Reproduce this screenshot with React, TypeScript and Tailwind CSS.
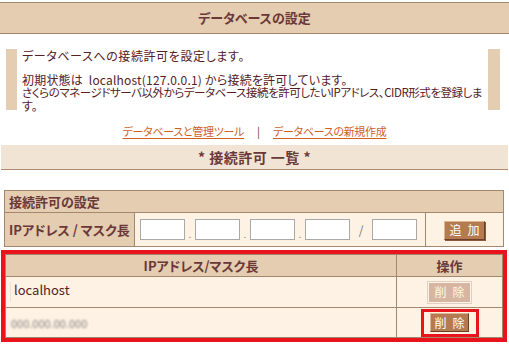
import React from 'react'

const font = "font-['Noto_Sans_CJK_JP',sans-serif] [font-feature-settings:'palt']"

function IpInput() {
  return (
    <span className="inline-block w-[45px] h-[21px] border border-[#a9a9a9] bg-white" />
  )
}

function Btn({ label, disabled, small }: { label: [string, string]; disabled?: boolean; small?: boolean }) {
  const base = disabled
    ? 'w-[43px] h-[21px] bg-[#d6b6a0] border border-[#fbf4ee] outline outline-1 outline-[#e3cdbd] text-[#fff5ee]'
    : small
      ? 'w-[39px] h-[19px] bg-[#b47b51] border border-t-[#e2b48e] border-l-[#e2b48e] border-r-[#6e3f24] border-b-[#6e3f24] text-white'
      : 'w-[41px] h-[19px] bg-[#b47b51] border border-t-[#e2b48e] border-l-[#e2b48e] border-r-[#6e3f24] border-b-[#6e3f24] shadow-[1px_1px_0_#8a5a3c] text-white'
  return (
    <button className={`${base} inline-flex items-center justify-center gap-[6px] text-[12px] leading-none align-middle`}>
      <span>{label[0]}</span>
      <span>{label[1]}</span>
    </button>
  )
}

export default function App() {
  return (
    <div className={`w-[509px] h-[344px] overflow-hidden bg-white pt-[2px] text-[12px] text-[#55201f] ${font}`}>
      {/* page title */}
      <div className="h-[32px] border-y border-[#a4876d] bg-[#e4cdb0] flex items-center justify-center">
        <span className="text-[13px] font-bold text-[#6b3838]">データベースの設定</span>
      </div>

      {/* description */}
      <div className="mt-[15px] ml-[6px] mr-[9px] h-[61px] border-l-[11px] border-r-[12px] border-[#e4cdb0] pl-[5px] whitespace-nowrap">
        <div className="h-[14px] leading-[14px] tracking-[0.6px]">データベースへの接続許可を設定します。</div>
        <div className="mt-[10px] h-[13px] leading-[13px] tracking-[0.2px]">初期状態は&nbsp; localhost(127.0.0.1) から接続を許可しています。</div>
        <div className="h-[13px] leading-[13px] text-[11.5px] tracking-[-0.45px]">さくらのマネージドサーバ以外からデータベース接続を許可したいIPアドレス、CIDR形式を登録しま</div>
        <div className="h-[13px] leading-[13px]">す。</div>
      </div>

      {/* links */}
      <div className="mt-[13px] h-[16px] leading-[16px] flex justify-center items-center text-[11px]">
        <a className="text-[#d0601f] underline underline-offset-2 tracking-[-0.3px]">データベースと管理ツール</a>
        <span className="mx-[13px] text-[#6b3838]">|</span>
        <a className="text-[#d0601f] underline underline-offset-2 tracking-[-0.3px]">データベースの新規作成</a>
      </div>

      {/* list heading */}
      <div className="mt-[6px] mx-[1px] h-[25px] border-b border-[#b08b70] bg-[#f2e4d4] flex items-center justify-center">
        <span className="text-[14px] font-bold text-[#6b3838] tracking-[0.5px]">* 接続許可 一覧 *</span>
      </div>

      {/* add form */}
      <table className="mt-[20px] ml-[4px] w-[500px] border-collapse border border-[#a4876d] table-fixed">
        <colgroup>
          <col className="w-[130px]" />
          <col className="w-[291px]" />
          <col />
        </colgroup>
        <tbody>
          <tr className="h-[22px]">
            <td colSpan={3} className="bg-[#e4cdb0] px-[4px] font-bold text-[13px] text-[#6b3838] leading-[20px]">
              接続許可の設定
            </td>
          </tr>
          <tr className="h-[34px] border-t border-[#a4876d]">
            <td className="bg-[#e4cdb0] px-[4px] font-bold text-[13px] text-[#6b3838] whitespace-nowrap">
              IPアドレス / マスク長
            </td>
            <td className="bg-[#fdf2e4] border-l border-[#a4876d] pl-[5px]">
              <div className="flex items-end">
                <IpInput />
                <span className="w-[10px] text-center text-[10px] text-[#888] leading-[12px]">.</span>
                <IpInput />
                <span className="w-[10px] text-center text-[10px] text-[#888] leading-[12px]">.</span>
                <IpInput />
                <span className="w-[10px] text-center text-[10px] text-[#888] leading-[12px]">.</span>
                <IpInput />
                <span className="w-[22px] text-center text-[12px] text-[#777] self-center">/</span>
                <IpInput />
              </div>
            </td>
            <td className="bg-[#fdf2e4] border-l border-[#a4876d] text-center">
              <Btn label={['追', '加']} />
            </td>
          </tr>
        </tbody>
      </table>

      {/* list */}
      <div className="mt-[3px] ml-[1px] w-[506px] h-[92px] border-4 border-[#e8131b]">
        <table className="w-full border-collapse border border-[#a4876d] table-fixed">
          <colgroup>
            <col className="w-[391px]" />
            <col />
          </colgroup>
          <tbody>
            <tr className="h-[22px] bg-[#e4cdb0]">
              <th className="text-center font-bold text-[13px] text-[#6b3838]">IPアドレス/マスク長</th>
              <th className="border-l border-[#a4876d] text-center font-bold text-[13px] text-[#6b3838]">操作</th>
            </tr>
            <tr className="h-[31px] border-t border-[#a4876d] bg-[#fdf2e4]">
              <td className="pl-[4px]">
                <div className="border-l border-[#ece2d6] pl-[3px] h-[20px] leading-[16px] text-[13px]">localhost</div>
              </td>
              <td className="border-l border-[#a4876d] text-center">
                <Btn label={['削', '除']} disabled />
              </td>
            </tr>
            <tr className="h-[30px] border-t border-[#a4876d] bg-[#fdf2e4]">
              <td className="pl-[5px]">
                <span className="text-[11px] text-[#8a8080] blur-[1.3px]">000.000.00.000</span>
              </td>
              <td className="border-l border-[#a4876d] text-center">
                <span className="inline-flex items-center justify-center w-[58px] h-[28px] border-[3px] border-[#e8131b] align-middle">
                  <Btn label={['削', '除']} small />
                </span>
              </td>
            </tr>
          </tbody>
        </table>
      </div>
    </div>
  )
}
